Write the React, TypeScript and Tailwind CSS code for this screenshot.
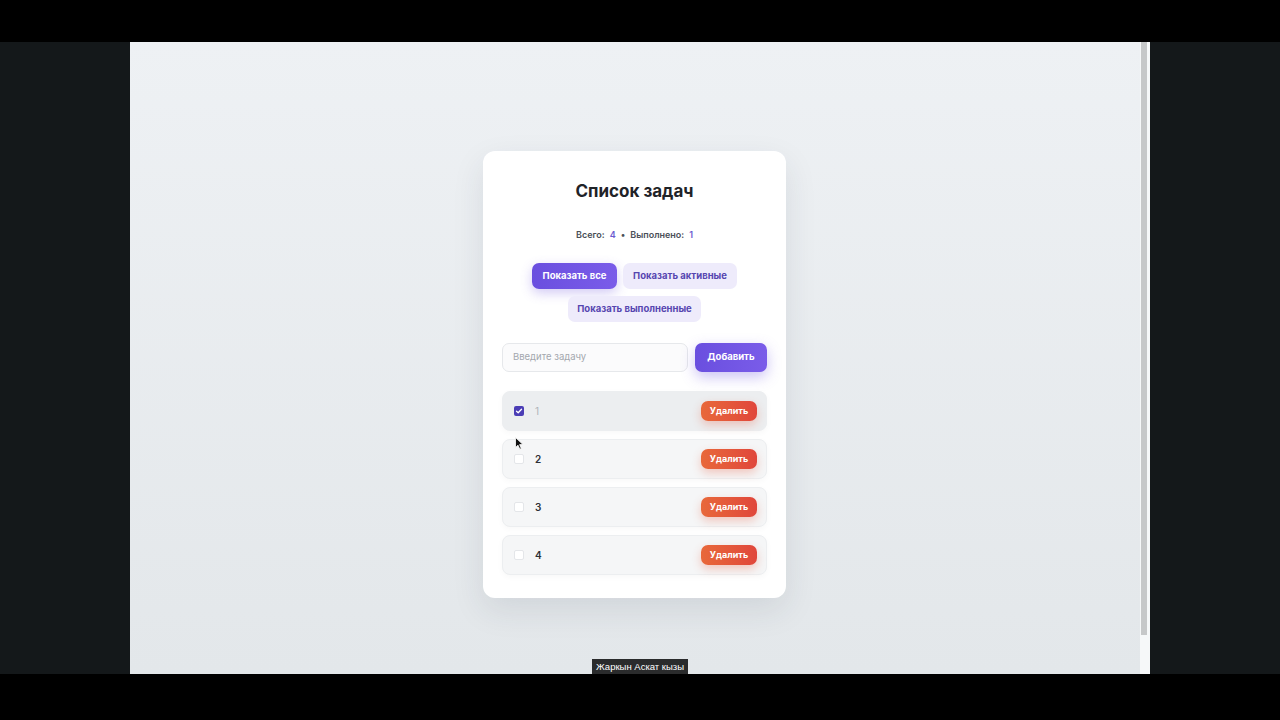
import React from "react";

const tasks = [
  { id: 1, text: "1", done: true },
  { id: 2, text: "2", done: false },
  { id: 3, text: "3", done: false },
  { id: 4, text: "4", done: false },
];

function Cursor() {
  return (
    <svg
      className="absolute left-[385px] top-[395px]"
      width="9"
      height="13"
      viewBox="0 0 9 13"
    >
      <path d="M0.5 0.5 L0.5 10.5 L3 8.2 L4.8 12.2 L6.3 11.5 L4.6 7.6 L8 7.6 Z" fill="#111" stroke="#fff" strokeWidth="0.8" />
    </svg>
  );
}

export default function App() {
  return (
    <div className="w-[1280px] h-[720px] bg-black flex flex-col overflow-hidden" style={{ fontFamily: "Inter, 'Noto Sans', sans-serif" }}>
      <div className="h-[42px] bg-black" />
      <div className="h-[632px] flex">
        <div className="w-[130px] bg-[#14181a]" />
        <div className="w-[1020px] relative flex bg-gradient-to-b from-[#eef1f4] to-[#e3e7ea]">
          <div className="flex-1 flex justify-center pt-[109px] pr-[1px]">
            <div className="w-[303px] h-[447px] bg-white rounded-[12px] shadow-[0_12px_32px_rgba(40,50,70,0.10)] px-[19px] pt-[28px] flex flex-col">
              <h1 className="text-[17px] leading-[24px] font-bold text-[#1f2328] text-center">Список задач</h1>
              <div className="mt-[25px] h-[14px] flex items-center justify-center gap-[5px] text-[9px] font-semibold text-[#4b5058]">
                <span>Всего:</span>
                <span className="text-[#6a5ad0]">4</span>
                <span>•</span>
                <span>Выполнено:</span>
                <span className="text-[#6a5ad0]">1</span>
              </div>
              <div className="mt-[21px] flex flex-wrap justify-center gap-x-[6px] gap-y-[7px]">
                <button className="w-[85px] h-[26px] rounded-[7px] bg-gradient-to-r from-[#6a4fdf] to-[#7a5ce9] text-white text-[9.5px] font-bold shadow-[0_4px_12px_rgba(106,79,223,0.30)]">Показать все</button>
                <button className="w-[114px] h-[26px] rounded-[7px] bg-[#eeebfb] text-[#5646b0] text-[9.5px] font-bold">Показать активные</button>
                <button className="w-[133px] h-[26px] rounded-[7px] bg-[#eeebfb] text-[#5646b0] text-[9.5px] font-bold">Показать выполненные</button>
              </div>
              <div className="mt-[21px] flex gap-[7px]">
                <div className="flex-1 h-[29px] rounded-[7px] border border-[#e6e8eb] bg-[#fbfbfc] flex items-center px-[10px] text-[9.5px] text-[#a3a7ae]">Введите задачу</div>
                <button className="w-[72px] h-[29px] rounded-[7px] bg-gradient-to-r from-[#6a4fdf] to-[#7a5ce9] text-white text-[9.5px] font-bold shadow-[0_5px_14px_rgba(106,79,223,0.35)]">Добавить</button>
              </div>
              <div className="mt-[19px] flex flex-col gap-[8px]">
                {tasks.map((t, i) => (
                  <div
                    key={t.id}
                    className={`h-[40px] rounded-[8px] border border-[#eceef0] flex items-center pl-[11px] pr-[9px] shadow-[0_2px_6px_rgba(0,0,0,0.03)] ${i === 0 ? "bg-[#eceef0]" : "bg-[#f5f6f7]"}`}
                  >
                    {t.done ? (
                      <div className="w-[10px] h-[10px] rounded-[2px] bg-[#4b3db5] flex items-center justify-center">
                        <svg width="8" height="8" viewBox="0 0 8 8"><path d="M1.5 4.2 L3.2 5.8 L6.5 2.2" fill="none" stroke="#fff" strokeWidth="1.3" strokeLinecap="round" strokeLinejoin="round" /></svg>
                      </div>
                    ) : (
                      <div className="w-[10px] h-[10px] rounded-[2px] bg-white border border-[#e4e6e9]" />
                    )}
                    <span className={`ml-[11px] text-[10px] ${t.done ? "text-[#b0b3b8] font-normal" : "text-[#2d3036] font-semibold"}`}>{t.text}</span>
                    <button className="ml-auto w-[56px] h-[20px] rounded-[7px] bg-gradient-to-r from-[#e8683a] to-[#e0463b] text-white text-[9px] font-bold shadow-[0_4px_10px_rgba(232,90,58,0.30)]">Удалить</button>
                  </div>
                ))}
              </div>
            </div>
          </div>
          <div className="w-[10px] bg-[#f6f8f9] pl-[1px]">
            <div className="w-[6px] h-[593px] bg-[#c6c8c9]" />
          </div>
          <Cursor />
          <div className="absolute left-[462px] top-[617px] w-[96px] h-[15px] bg-[#2a2b2c] text-white text-[9.5px] leading-[15px] text-center" style={{ fontFamily: "'Liberation Sans', Arial, sans-serif" }}>Жаркын Аскат кызы</div>
        </div>
        <div className="w-[130px] bg-[#14181a]" />
      </div>
      <div className="flex-1 bg-black" />
    </div>
  );
}
